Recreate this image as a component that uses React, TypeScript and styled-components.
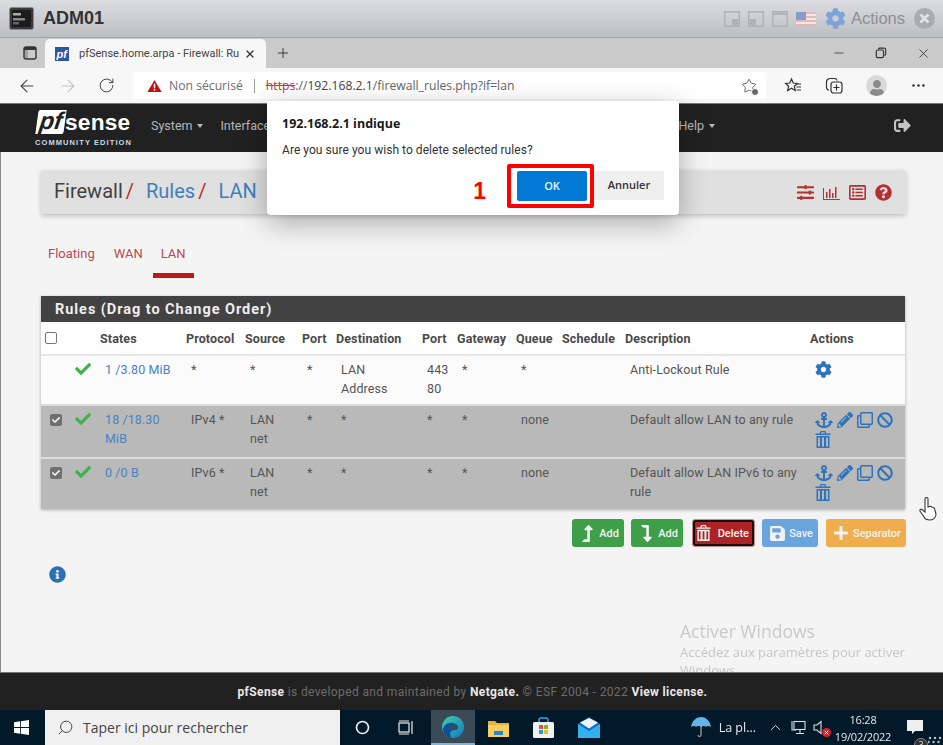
import React from "react";
import styled, { createGlobalStyle } from "styled-components";
import { ArrowLeft, ArrowRight, RotateCw, Star, Plus, X, Minus, MoreHorizontal, ChevronUp, Search } from "lucide-react";
import {
  FaAnchor, FaPencilAlt, FaRegClone, FaBan, FaCog, FaCheck, FaLevelUpAlt, FaLevelDownAlt,
  FaSave, FaPlus, FaSignOutAlt, FaQuestionCircle, FaSlidersH, FaInfoCircle, FaRegListAlt, FaUser,
} from "react-icons/fa";

const Global = createGlobalStyle`
  html, body { margin: 0; padding: 0; background: #f4f4f4; }
  * { box-sizing: border-box; }
`;

const Screen = styled.div`
  position: relative;
  width: 943px;
  height: 745px;
  overflow: hidden;
  display: flex;
  flex-direction: column;
  font-family: Roboto, "Liberation Sans", sans-serif;
  filter: blur(0.4px);
`;

/* ---------- VM window title bar ---------- */
const TitleBar = styled.div`
  flex: 0 0 38px;
  display: flex;
  align-items: center;
  padding: 0 8px 0 9px;
  background: linear-gradient(#dcdde0, #bdbec1);
  border-bottom: 1px solid #a3a3a3;
`;
const VmName = styled.span`
  margin-left: 9px;
  font: bold 18px "Liberation Sans", sans-serif;
  color: #333;
`;
const VmTools = styled.div`
  margin-left: auto;
  display: flex;
  align-items: center;
`;
const VmSquare = styled.svg`
  width: 16px;
  height: 16px;
  margin-right: 8px;
  display: block;
`;
const VmFlag = styled.svg`
  width: 20px;
  height: 14px;
  margin-right: 9px;
  opacity: 0.85;
`;
const VmActions = styled.span`
  font: 16.5px "Liberation Sans", sans-serif;
  color: #8d8f93;
  margin: 0 9px 0 5px;
`;

/* ---------- Browser tabs ---------- */
const TabStrip = styled.div`
  flex: 0 0 30px;
  display: flex;
  align-items: flex-end;
  padding-left: 15px;
  background: #cacaca;
  color: #333;
`;
const TabStripIcon = styled.div<{ $gap?: number }>`
  width: 30px;
  height: 30px;
  margin-left: ${(p) => p.$gap ?? 0}px;
  display: flex;
  align-items: center;
  justify-content: center;
`;
const ActiveTab = styled.div`
  width: 221px;
  height: 29px;
  display: flex;
  align-items: center;
  padding-left: 10px;
  background: #f7f7f7;
  border-radius: 5px 5px 0 0;
`;
const TabTitle = styled.span`
  flex: 0 0 157px;
  min-width: 0;
  margin: 0 8px 0 10px;
  font: 11px Roboto, sans-serif;
  color: #444;
  white-space: nowrap;
`;
const WindowButtons = styled.div`
  margin-left: auto;
  display: flex;
  align-items: center;
  height: 30px;
  padding-right: 12px;
  gap: 29px;
`;

/* ---------- Browser toolbar ---------- */
const Toolbar = styled.div`
  flex: 0 0 35px;
  display: flex;
  align-items: center;
  background: #f7f7f7;
  padding-left: 17px;
  color: #444;
`;
const ToolButton = styled.div<{ $w: number }>`
  width: ${(p) => p.$w}px;
  display: flex;
  align-items: center;
  justify-content: flex-start;
`;
const Address = styled.div`
  width: 633px;
  height: 27px;
  margin-left: 9px;
  display: flex;
  align-items: center;
  padding: 0 9px 0 14px;
  background: #fff;
  border-radius: 4px;
  font: 12.2px "Open Sans", sans-serif;
  color: #666;
`;
const Insecure = styled.span`
  margin-left: 7px;
  color: #6e6e6e;
`;
const Pipe = styled.span`
  width: 1px;
  height: 14px;
  margin: 0 11px;
  background: #999;
`;
const Scheme = styled.span`
  color: #c23b3b;
  text-decoration: line-through;
`;
const Host = styled.span`
  color: #444;
`;
const AddressEnd = styled.div`
  margin-left: auto;
  display: flex;
  position: relative;
  color: #555;
`;
const AddMark = styled.span`
  position: absolute;
  right: -2px;
  bottom: -2px;
  width: 8px;
  height: 8px;
  border-radius: 50%;
  background: #666;
  border: 1px solid #fff;
`;
const ToolbarRight = styled.div`
  margin-left: 18px;
  display: flex;
  align-items: center;
  gap: 23px;
  color: #333;
`;
const Avatar = styled.div`
  width: 21px;
  height: 21px;
  border-radius: 50%;
  background: #d9d9d9;
  color: #8b8b8b;
  display: flex;
  align-items: flex-end;
  justify-content: center;
  overflow: hidden;
`;

/* ---------- pfSense nav ---------- */
const Nav = styled.div`
  flex: 0 0 49px;
  display: flex;
  align-items: center;
  background: #212121;
  border-top: 1px solid #777;
  padding: 0 0 5px 35px;
  color: #b9b9b9;
`;
const Logo = styled.div`
  width: 98px;
  display: flex;
  flex-direction: column;
  margin-top: 6px;
`;
const LogoTop = styled.div`
  display: flex;
  align-items: center;
  height: 24px;
  margin-left: 2px;
`;
const LogoPf = styled.span`
  display: inline-block;
  width: 28px;
  height: 24px;
  background: #fff;
  color: #212121;
  transform: skewX(-8deg);
  border-radius: 2px 0 2px 0;
  font: italic bold 24px/22px "Liberation Sans", sans-serif;
  text-align: center;
`;
const LogoSense = styled.span`
  font: bold 22.7px/24px "Liberation Sans", sans-serif;
  color: #fff;
  letter-spacing: 0.2px;
`;
const LogoEdition = styled.div`
  margin-top: 4px;
  font: bold 7.5px/9px "Liberation Sans", sans-serif;
  letter-spacing: 1.08px;
  color: #c9dbe6;
  white-space: nowrap;
`;
const NavItems = styled.div`
  width: 564px;
  margin-left: 18px;
  display: flex;
  align-items: center;
  gap: 17px;
  font-size: 12.5px;
`;
const NavItem = styled.span<{ $end?: boolean }>`
  display: flex;
  align-items: center;
  gap: 5px;
  margin-left: ${(p) => (p.$end ? "auto" : "0")};
  &::after {
    content: "";
    border-top: 4px solid currentColor;
    border-left: 3.5px solid transparent;
    border-right: 3.5px solid transparent;
  }
`;
const SignOut = styled.div`
  margin-left: auto;
  margin-right: 32px;
  display: flex;
  color: #c4c4c4;
`;

/* ---------- page ---------- */
const Main = styled.main`
  flex: 1;
  min-height: 0;
  position: relative;
  padding: 18px 37px 0 40px;
  background: #f4f4f4;
  border-left: 1px solid #8a8a8a;
`;
const Crumbs = styled.div`
  height: 44px;
  display: flex;
  align-items: center;
  padding: 0 14px 2px 13px;
  background: #e0e0e0;
  border-radius: 2px;
  box-shadow: 0 2px 5px rgba(0, 0, 0, 0.22);
  font-size: 20px;
  color: #424242;
`;
const Crumb = styled.span`
  color: #3e7fc0;
`;
const Slash = styled.span`
  color: #b82c2c;
  margin: 0 12px 0 3px;
`;
const CrumbIcons = styled.div`
  margin-left: auto;
  padding-top: 2px;
  display: flex;
  align-items: center;
  gap: 9px;
  color: #b52f2f;
`;
const Tabs = styled.nav`
  height: 42px;
  margin-top: 26px;
  display: flex;
  gap: 2px;
  font-size: 13px;
`;
const TabLink = styled.a<{ $on?: boolean }>`
  display: block;
  padding: 5px 8px 0;
  color: #bb4a4f;
  border-bottom: 5px solid ${(p) => (p.$on ? "#c01818" : "transparent")};
  height: 38px;
  line-height: 17px;
  &:first-child { padding: 5px 9px 0 7px; }
`;
const Panel = styled.section`
  margin-top: 14px;
  margin-right: 1px;
  background: #fff;
  box-shadow: 0 1px 3px rgba(0, 0, 0, 0.3);
`;
const PanelTitle = styled.div`
  height: 26px;
  padding-left: 14px;
  background: #424242;
  color: #eee;
  font-size: 14.5px;
  font-weight: 700;
  line-height: 28px;
  letter-spacing: 0.95px;
`;
const Table = styled.table`
  width: 864px;
  table-layout: fixed;
  border-collapse: collapse;
  font-size: 12.5px;
  line-height: 18.5px;
  letter-spacing: 0.1px;
`;
const Th = styled.th`
  height: 33px;
  padding: 2px 0 0;
  text-align: left;
  font-size: 12.5px;
  letter-spacing: 0.12px;
  font-weight: 700;
  color: #4a4a4a;
  border-bottom: 2px solid #e6e6e6;
  white-space: nowrap;
`;
const Tr = styled.tr<{ $gray?: boolean; $h: number }>`
  height: ${(p) => p.$h}px;
  background: ${(p) => (p.$gray ? "#b9b9b9" : "#fbfbfb")};
  color: #555;
  & + & { border-top: 2px solid #dcdcdc; }
`;
const Td = styled.td`
  padding: 5px 10px 0 5px;
  vertical-align: top;
`;
const StatusCell = styled.td`
  padding: 5px 0 0 3px;
  vertical-align: top;
  color: #3fb34a;
`;
const StateLink = styled.a`
  color: #4a82bf;
`;
const Box = styled.input.attrs({ type: "checkbox" })`
  appearance: none;
  display: block;
  width: 12px;
  height: 12px;
  margin: 0 0 2px 4px;
  border-radius: 2px;
  background: #fff;
  border: 1px solid #767676;
`;
const CheckedBox = styled.span`
  display: flex;
  align-items: center;
  justify-content: center;
  width: 12px;
  height: 12px;
  margin: 3px 0 0 4px;
  border-radius: 2px;
  background: #707070;
  color: #fff;
`;
const Actions = styled.div`
  display: flex;
  flex-wrap: wrap;
  align-items: center;
  width: 80px;
  gap: 2px 4px;
  color: #2f74bb;
`;
const Buttons = styled.div`
  margin-top: 10px;
  display: flex;
  justify-content: flex-end;
`;
const Btn = styled.button<{ $bg: string; $w: number; $gap: number; $focus?: boolean }>`
  width: ${(p) => p.$w}px;
  height: 28px;
  margin-left: ${(p) => p.$gap}px;
  padding: 0 5px 0 ${(p) => (p.$focus ? 3 : 7)}px;
  display: flex;
  align-items: center;
  justify-content: space-between;
  border: ${(p) => (p.$focus ? "1px solid #c98b8b" : "none")};
  box-shadow: ${(p) => (p.$focus ? "inset 0 0 0 2px #111" : "none")};
  border-radius: 3px;
  background: ${(p) => p.$bg};
  color: #f2f2f2;
  font: 500 11px Roboto, sans-serif;
`;
const Info = styled.div`
  margin: 19px 0 0 8px;
  display: flex;
  color: #2c6fb5;
`;
const Watermark = styled.div`
  position: absolute;
  left: 679px;
  top: 467px;
  width: 240px;
  font: 13px/18px "Open Sans", sans-serif;
  color: #c6c6c6;
`;
const WatermarkTitle = styled.div`
  font-size: 17.5px;
  line-height: 24px;
  color: #c9c9c9;
`;
const Footer = styled.footer`
  position: relative;
  flex: 0 0 38px;
  display: flex;
  align-items: center;
  justify-content: center;
  background: #212121;
  border-top: 1px solid #777;
  font-size: 12px;
  letter-spacing: 0.37px;
  color: #6d6d6d;
  padding-left: 2px;
`;
const FooterStrong = styled.b`
  color: #e8e8e8;
  font-weight: 700;
`;

/* ---------- Taskbar ---------- */
const Taskbar = styled.div`
  flex: 0 0 35px;
  display: flex;
  align-items: stretch;
  background: #02192a;
  color: #e6e6e6;
`;
const StartBtn = styled.div`
  width: 45px;
  display: flex;
  align-items: center;
  justify-content: center;
  padding-right: 2px;
`;
const SearchBox = styled.div`
  width: 295px;
  display: flex;
  align-items: center;
  padding-left: 12px;
  background: #f0f0f0;
  color: #444;
  font: 14px "Open Sans", sans-serif;
`;
const SearchText = styled.span`
  margin-left: 9px;
`;
const SearchLens = styled(Search)`
  transform: scaleX(-1);
`;
const TaskIcon = styled.div<{ $w: number; $on?: boolean; $gap?: number }>`
  width: ${(p) => p.$w}px;
  margin-left: ${(p) => p.$gap ?? 0}px;
  display: flex;
  align-items: center;
  justify-content: center;
  background: ${(p) => (p.$on ? "#3a4a56" : "transparent")};
  border-bottom: ${(p) => (p.$on ? "2px solid #7fb5d8" : "none")};
`;
const Tray = styled.div`
  margin-left: auto;
  display: flex;
  align-items: center;
  font: 12px "Open Sans", sans-serif;
`;
const Weather = styled.span`
  margin: 0 11px 0 8px;
  font-size: 12.5px;
`;
const TrayIcon = styled.div`
  position: relative;
  display: flex;
  margin-right: 7px;
`;
const Clock = styled.div`
  width: 58px;
  margin: 0 13px 0 1px;
  text-align: center;
  font-size: 11px;
  line-height: 17px;
  letter-spacing: -0.2px;
  white-space: nowrap;
`;
const Notif = styled.div`
  position: relative;
  width: 38px;
  padding-left: 2px;
  display: flex;
  align-items: center;
`;
const NotifBadge = styled.span`
  position: absolute;
  left: 9px;
  top: 18px;
  width: 14px;
  height: 14px;
  border-radius: 50%;
  background: #333;
  border: 1px solid #888;
  color: #ddd;
  font-size: 9px;
  line-height: 12px;
  text-align: center;
`;
const Dots = styled.svg`
  position: absolute;
  left: 23px;
  top: 16px;
  width: 14px;
  height: 16px;
`;
const MuteX = styled.svg`
  position: absolute;
  right: -5px;
  bottom: -2px;
  width: 9px;
  height: 9px;
`;

/* ---------- JS confirm dialog ---------- */
const Dialog = styled.div`
  position: absolute;
  left: 267px;
  top: 101px;
  width: 412px;
  height: 114px;
  padding: 15px 15px 0;
  background: #fff;
  border-radius: 1px 1px 4px 4px;
  box-shadow: 0 8px 28px rgba(0, 0, 0, 0.3);
  font-family: "Open Sans", sans-serif;
  color: #222;
`;
const DialogTitle = styled.div`
  font-size: 12.5px;
  font-weight: 700;
  line-height: 16px;
  color: #1a1a1a;
`;
const DialogText = styled.div`
  margin-top: 10px;
  font: 12px/17px Roboto, sans-serif;
  letter-spacing: 0.05px;
  color: #333;
`;
const DialogRow = styled.div`
  margin-top: 5px;
  display: flex;
  align-items: flex-start;
  justify-content: flex-end;
`;
const StepNumber = styled.span`
  margin: 12px 21px 0 0;
  font: bold 23px/30px "Liberation Sans", sans-serif;
  color: #f00;
`;
const Highlight = styled.div`
  width: 87px;
  height: 44px;
  padding: 2px 3px 2px 6px;
  border: 4px solid #f00;
  border-radius: 2px;
  display: flex;
  align-items: center;
`;
const OkBtn = styled.button`
  width: 70px;
  height: 30px;
  padding: 0 0 2px;
  border: none;
  border-radius: 2px;
  background: #0078d4;
  color: #eef6ff;
  font: 600 11px "Open Sans", sans-serif;
`;
const CancelBtn = styled.button`
  width: 70px;
  height: 29px;
  margin-top: 7px;
  padding: 0 0 2px;
  border: none;
  border-radius: 2px;
  background: #efefef;
  color: #333;
  font: 600 11px "Open Sans", sans-serif;
`;
const Cursor = styled.svg`
  position: absolute;
  left: 919px;
  top: 497px;
  width: 18px;
  height: 24px;
`;

const Square = ({ kind }: { kind: 0 | 1 | 2 }) => (
  <VmSquare viewBox="0 0 16 16">
    <rect x="0.75" y="0.75" width="14.5" height="14.5" fill="none" stroke="#b0b2b5" strokeWidth="1.5" />
    {kind === 0 && <rect x="8" y="8" width="6.5" height="6.5" fill="#b0b2b5" />}
    {kind === 1 && <rect x="1.5" y="8" width="6.5" height="6.5" fill="#b0b2b5" />}
    {kind === 2 && <rect x="1.5" y="1.5" width="13" height="2.5" fill="#b0b2b5" />}
  </VmSquare>
);

const Trash = ({ size = 16 }: { size?: number }) => (
  <svg width={size} height={size + 1} viewBox="0 0 16 17" fill="currentColor">
    <path d="M5.500 0h5l1 2.500H15.500V4H.5V2.500H4.500zM6.300 1.200L5.900 2.500h4.200l-.4-1.300z" />
    <path fillRule="evenodd" d="M1.500 5h13v12h-13zM3 6.500V15.500h1.900V6.500zM7 6.500V15.500h2V6.500zM11.100 6.500V15.500H13V6.500z" />
  </svg>
);

const RuleRow = ({
  desc, states, proto, h,
}: { desc: string; states: string; proto: string; h: number }) => (
  <Tr $gray $h={h}>
    <Td><CheckedBox><FaCheck size={8} /></CheckedBox></Td>
    <StatusCell><FaCheck size={16} /></StatusCell>
    <Td><StateLink>{states}</StateLink></Td>
    <Td>{proto}</Td>
    <Td>LAN net</Td>
    <Td>*</Td>
    <Td>*</Td>
    <Td>*</Td>
    <Td>*</Td>
    <Td>none</Td>
    <Td />
    <Td>{desc}</Td>
    <Td>
      <Actions>
        <FaAnchor size={18} />
        <FaPencilAlt size={16} />
        <FaRegClone size={16} />
        <FaBan size={16} />
        <Trash />
      </Actions>
    </Td>
  </Tr>
);

const colWidths = [31, 28, 86, 59, 57, 34, 86, 35, 59, 46, 63, 185, 95];

export default function App() {
  return (
    <Screen>
      <Global />
      <TitleBar>
        <svg width="25" height="23" viewBox="0 0 25 23">
          <rect x="0.5" y="0.5" width="24" height="22" rx="2" fill="#3a3a3a" stroke="#8a8a8a" />
          <rect x="3" y="3" width="19" height="17" fill="#1c1c1c" />
          <rect x="4" y="6" width="8" height="2.5" fill="#aaa" />
          <rect x="4" y="11" width="12" height="2.5" fill="#888" />
          <rect x="4" y="15" width="6" height="2.5" fill="#666" />
        </svg>
        <VmName>ADM01</VmName>
        <VmTools>
          <Square kind={0} />
          <Square kind={1} />
          <Square kind={2} />
          <VmFlag viewBox="0 0 20 14">
            <rect width="20" height="14" fill="#e8b5b2" />
            <rect y="2" width="20" height="2" fill="#f2eeee" />
            <rect y="6" width="20" height="2" fill="#f2eeee" />
            <rect y="10" width="20" height="2" fill="#f2eeee" />
            <rect width="10" height="8" fill="#7f93c9" />
          </VmFlag>
          <FaCog size={21} color="#7ea3d8" />
          <VmActions>Actions</VmActions>
          <svg width="21" height="21" viewBox="0 0 21 21">
            <circle cx="10.5" cy="10.5" r="10.5" fill="#a9abae" />
            <path d="M6.5 6.5l8 8M14.5 6.5l-8 8" stroke="#e2e3e5" strokeWidth="2.6" />
          </svg>
        </VmTools>
      </TitleBar>

      <TabStrip>
        <TabStripIcon>
          <svg width="14" height="14" viewBox="0 0 14 14">
            <rect x="1" y="1" width="12" height="12" rx="2" fill="none" stroke="#333" strokeWidth="1.4" />
            <rect x="1" y="1" width="12" height="3" fill="#333" />
            <rect x="1" y="1" width="4" height="12" fill="#333" opacity="0.25" />
          </svg>
        </TabStripIcon>
        <ActiveTab>
          <svg width="14" height="14" viewBox="0 0 14 14">
            <rect width="14" height="14" fill="#2a56a8" />
            <text x="1.5" y="11" fontSize="11" fontWeight="700" fontStyle="italic" fill="#fff" fontFamily="Liberation Sans">pf</text>
          </svg>
          <TabTitle>pfSense.home.arpa - Firewall: Ru</TabTitle>
          <X size={12} strokeWidth={2.6} color="#333" />
        </ActiveTab>
        <TabStripIcon $gap={2}>
          <Plus size={16} strokeWidth={1.4} />
        </TabStripIcon>
        <WindowButtons>
          <Minus size={14} strokeWidth={1.3} />
          <svg width="12" height="12" viewBox="0 0 14 14">
            <rect x="1.5" y="3.5" width="8.5" height="9" rx="2" fill="none" stroke="#333" strokeWidth="1.4" />
            <path d="M4 3V2.5a1.5 1.5 0 0 1 1.5-1.2h5a2 2 0 0 1 2 2v5.2a1.5 1.5 0 0 1-1.5 1.4" fill="none" stroke="#333" strokeWidth="1.3" />
          </svg>
          <X size={15} strokeWidth={1.4} />
        </WindowButtons>
      </TabStrip>

      <Toolbar>
        <ToolButton $w={41}><ArrowLeft size={20} strokeWidth={1.3} /></ToolButton>
        <ToolButton $w={40}><ArrowRight size={20} strokeWidth={1.3} color="#c4c4c4" /></ToolButton>
        <ToolButton $w={26}><RotateCw size={17} strokeWidth={1.4} /></ToolButton>
        <Address>
          <svg width="15" height="14" viewBox="0 0 16 14">
            <path d="M8 0.5L15.6 13.5H0.4z" fill="#c40f12" />
            <rect x="7.2" y="4.5" width="1.6" height="5" fill="#fff" />
            <rect x="7.2" y="10.4" width="1.6" height="1.6" fill="#fff" />
          </svg>
          <Insecure>Non sécurisé</Insecure>
          <Pipe />
          <Scheme>https</Scheme>
          <span>://</span>
          <Host>192.168.2.1</Host>
          <span>/firewall_rules.php?if=lan</span>
          <AddressEnd>
            <Star size={16} strokeWidth={1.3} />
            <AddMark />
          </AddressEnd>
        </Address>
        <ToolbarRight>
          <svg width="18" height="18" viewBox="0 0 18 18" fill="none" stroke="#333" strokeWidth="1.2">
            <path d="M7.5 2l1.8 4 4 .4-3 2.8.9 4.3-3.7-2.2-3.8 2.2.9-4.3-3-2.8 4.2-.4z" />
            <path d="M12 7h5M12.5 10h4.5M12.5 13h4.5" />
          </svg>
          <svg width="18" height="18" viewBox="0 0 18 18" fill="none" stroke="#333" strokeWidth="1.2">
            <rect x="6" y="5" width="11" height="11" rx="2.5" />
            <path d="M4 13a2.5 2.5 0 0 1-2.5-2.5V5A3.5 3.5 0 0 1 5 1.500h4.500A2.500 2.500 0 0 1 12 3.500M11.500 7.500v6M8.500 10.500h6" />
          </svg>
          <Avatar><FaUser size={16} /></Avatar>
          <MoreHorizontal size={17} strokeWidth={1.8} />
        </ToolbarRight>
      </Toolbar>

      <Nav>
        <Logo>
          <LogoTop>
            <LogoPf>pf</LogoPf>
            <LogoSense>sense</LogoSense>
          </LogoTop>
          <LogoEdition>COMMUNITY EDITION</LogoEdition>
        </Logo>
        <NavItems>
          <NavItem>System</NavItem>
          <NavItem>Interfaces</NavItem>
          <NavItem $end>Help</NavItem>
        </NavItems>
        <SignOut><FaSignOutAlt size={17} /></SignOut>
      </Nav>

      <Main>
        <Crumbs>
          <span>Firewall</span>
          <Slash>/</Slash>
          <Crumb>Rules</Crumb>
          <Slash>/</Slash>
          <Crumb>LAN</Crumb>
          <CrumbIcons>
            <FaSlidersH size={17} />
            <svg width="17" height="15" viewBox="0 0 17 15" fill="#b52f2f">
              <rect x="0" y="14" width="17" height="1" />
              <rect x="0" y="3" width="1" height="11" />
              <rect x="3" y="7" width="1.5" height="6" />
              <rect x="6" y="4" width="1.5" height="9" />
              <rect x="9" y="8" width="1.5" height="5" />
              <rect x="12" y="2" width="1.5" height="11" />
            </svg>
            <FaRegListAlt size={17} />
            <FaQuestionCircle size={17} />
          </CrumbIcons>
        </Crumbs>
        <Tabs>
          <TabLink>Floating</TabLink>
          <TabLink>WAN</TabLink>
          <TabLink $on>LAN</TabLink>
        </Tabs>
        <Panel>
          <PanelTitle>Rules (Drag to Change Order)</PanelTitle>
          <Table>
            <colgroup>
              {colWidths.map((w, i) => <col key={i} width={w} />)}
            </colgroup>
            <thead>
              <tr>
                <Th><Box /></Th>
                <Th />
                <Th>States</Th>
                <Th>Protocol</Th>
                <Th>Source</Th>
                <Th>Port</Th>
                <Th>Destination</Th>
                <Th>Port</Th>
                <Th>Gateway</Th>
                <Th>Queue</Th>
                <Th>Schedule</Th>
                <Th>Description</Th>
                <Th>Actions</Th>
              </tr>
            </thead>
            <tbody>
              <Tr $h={50}>
                <Td />
                <StatusCell><FaCheck size={16} /></StatusCell>
                <Td><StateLink>1 /3.80 MiB</StateLink></Td>
                <Td>*</Td>
                <Td>*</Td>
                <Td>*</Td>
                <Td>LAN Address</Td>
                <Td>443<br />80</Td>
                <Td>*</Td>
                <Td>*</Td>
                <Td />
                <Td>Anti-Lockout Rule</Td>
                <Td><Actions><FaCog size={17} /></Actions></Td>
              </Tr>
              <RuleRow h={53} states="18 /18.30 MiB" proto="IPv4 *" desc="Default allow LAN to any rule" />
              <RuleRow h={51} states="0 /0 B" proto="IPv6 *" desc="Default allow LAN IPv6 to any rule" />
            </tbody>
          </Table>
        </Panel>
        <Buttons>
          <Btn $bg="#3f9f48" $w={52} $gap={0}><FaLevelUpAlt size={17} />Add</Btn>
          <Btn $bg="#3f9f48" $w={52} $gap={7}><FaLevelDownAlt size={17} />Add</Btn>
          <Btn $bg="#ad2325" $w={63} $gap={9} $focus><Trash size={15} />Delete</Btn>
          <Btn $bg="#6aa5df" $w={56} $gap={7}><FaSave size={17} />Save</Btn>
          <Btn $bg="#f0ad4e" $w={80} $gap={8}><FaPlus size={16} />Separator</Btn>
        </Buttons>
        <Info><FaInfoCircle size={17} /></Info>
        <Watermark>
          <WatermarkTitle>Activer Windows</WatermarkTitle>
          Accédez aux paramètres pour activer Windows.
        </Watermark>
      </Main>

      <Footer>
        <span>
          <FooterStrong>pfSense</FooterStrong> is developed and maintained by <FooterStrong>Netgate.</FooterStrong> © ESF 2004 - 2022 <FooterStrong>View license.</FooterStrong>
        </span>
      </Footer>

      <Taskbar>
        <StartBtn>
          <svg width="15" height="15" viewBox="0 0 15 15" fill="#fff">
            <path d="M0 2.200l6.200-.9v5.800H0zM7 1.200L15 0v7.100H7zM0 7.900h6.200v5.800L0 12.800zM7 7.900h8V15l-8-1.200z" />
          </svg>
        </StartBtn>
        <SearchBox>
          <SearchLens size={17} strokeWidth={1.4} />
          <SearchText>Taper ici pour rechercher</SearchText>
        </SearchBox>
        <TaskIcon $w={45}>
          <svg width="15" height="15" viewBox="0 0 15 15"><circle cx="7.500" cy="7.500" r="6" fill="none" stroke="#eee" strokeWidth="1.700" /></svg>
        </TaskIcon>
        <TaskIcon $w={42}>
          <svg width="16" height="15" viewBox="0 0 16 15" fill="none" stroke="#eee" strokeWidth="1.200">
            <rect x="1" y="3" width="10" height="9" />
            <path d="M1 1h10M1 14h10M14 1v13" />
          </svg>
        </TaskIcon>
        <TaskIcon $w={44} $on $gap={4}>
          <svg width="24" height="24" viewBox="0 0 24 24">
            <defs>
              <linearGradient id="edgeA" x1="0" y1="0" x2="1" y2="1">
                <stop offset="0" stopColor="#3fd0a5" />
                <stop offset="1" stopColor="#1578c4" />
              </linearGradient>
            </defs>
            <circle cx="12" cy="12" r="11" fill="url(#edgeA)" />
            <path d="M2 14c2-7 10-8 14-4 2 2 1 5-2 5-4 0-7 3-3 8-5-1-9-4-9-9z" fill="#0f4f96" />
            <ellipse cx="13" cy="12.500" rx="4" ry="2.500" fill="#3a4a56" />
          </svg>
        </TaskIcon>
        <TaskIcon $w={46}>
          <svg width="21" height="18" viewBox="0 0 21 18">
            <path d="M0 2h7l2 2h12v14H0z" fill="#e8b33b" />
            <rect y="6" width="21" height="12" fill="#f5cf62" />
            <rect x="6" y="12" width="9" height="4" fill="#2c84c9" />
          </svg>
        </TaskIcon>
        <TaskIcon $w={45}>
          <svg width="21" height="21" viewBox="0 0 21 21">
            <path d="M6 6V3a2 2 0 0 1 2-2h5a2 2 0 0 1 2 2v3" fill="none" stroke="#2ea6dc" strokeWidth="1.500" />
            <rect y="5" width="21" height="16" rx="1.500" fill="#f0f0f0" />
            <rect x="6" y="8" width="4" height="4" fill="#e8502a" />
            <rect x="11" y="8" width="4" height="4" fill="#7cb82f" />
            <rect x="6" y="13" width="4" height="4" fill="#1e9ae0" />
            <rect x="11" y="13" width="4" height="4" fill="#f3b51c" />
          </svg>
        </TaskIcon>
        <TaskIcon $w={46}>
          <svg width="22" height="21" viewBox="0 0 22 21">
            <path d="M11 0L22 7v14H0V7z" fill="#0f6cbd" />
            <path d="M0 7l11 7 11-7v14H0z" fill="#34b0ee" />
            <path d="M2 5.500L11 1l9 4.500-9 6z" fill="#fff" opacity="0.92" />
          </svg>
        </TaskIcon>
        <Tray>
          <svg width="20" height="21" viewBox="0 0 20 21">
            <path d="M0 10C1 3 6 0 10 0s9 3 10 10c-2-1.500-4-1.500-5 0-1-1.500-3-1.500-5 0-1-1.500-4-1.500-5 0-1-1.500-3-1.500-5 0z" fill="#62b3e6" />
            <path d="M10 9v9a1.500 1.500 0 0 1-3 0" fill="none" stroke="#aaa" strokeWidth="1.200" />
          </svg>
          <Weather>La pl...</Weather>
          <TrayIcon><ChevronUp size={17} strokeWidth={1.300} /></TrayIcon>
          <TrayIcon>
            <svg width="15" height="15" viewBox="0 0 15 15" fill="none" stroke="#ddd" strokeWidth="1.100">
              <rect x="3" y="1.500" width="11" height="8" />
              <path d="M1 1v9h4M9 10v3M5 13.500h8" />
            </svg>
          </TrayIcon>
          <TrayIcon>
            <svg width="13" height="15" viewBox="0 0 13 15" fill="none" stroke="#ddd" strokeWidth="1.100">
              <path d="M1 5h3l4-3.500v12L4 10H1z" />
            </svg>
            <MuteX viewBox="0 0 9 9">
              <circle cx="4.500" cy="4.500" r="4.500" fill="#d8202a" />
              <path d="M2.800 2.800l3.400 3.400M6.200 2.800L2.800 6.200" stroke="#fff" strokeWidth="1" />
            </MuteX>
          </TrayIcon>
          <Clock>16:28<br />19/02/2022</Clock>
          <Notif>
            <svg width="16" height="15" viewBox="0 0 16 15" fill="#eee"><path d="M0 0h16v11H8l-3 3v-3H0z" /></svg>
            <NotifBadge>3</NotifBadge>
            <Dots viewBox="0 0 14 16" fill="#b9c2c8">
              {[0, 1, 2, 3].flatMap((r) => [0, 1, 2].map((c) => (
                <circle key={`${r}-${c}`} cx={2 + c * 5 - (r % 2) * 1.5} cy={2 + r * 4} r="1.200" />
              )))}
            </Dots>
          </Notif>
        </Tray>
      </Taskbar>

      <Dialog>
        <DialogTitle>192.168.2.1 indique</DialogTitle>
        <DialogText>Are you sure you wish to delete selected rules?</DialogText>
        <DialogRow>
          <StepNumber>1</StepNumber>
          <Highlight><OkBtn>OK</OkBtn></Highlight>
          <CancelBtn>Annuler</CancelBtn>
        </DialogRow>
      </Dialog>

      <Cursor viewBox="0 0 18 24">
        <path d="M6 2a1.500 1.500 0 0 1 3 0v8l1.500-.5a1.400 1.400 0 0 1 2 .5l1.500.200 1.500 1.300L17 17c0 3-2 6-6 6-3 0-5-1-6-3l-4-6c-.6-1.300 1-2.500 2-1.500l3 2.500z" fill="#fff" stroke="#333" strokeWidth="1.100" />
      </Cursor>
    </Screen>
  );
}
